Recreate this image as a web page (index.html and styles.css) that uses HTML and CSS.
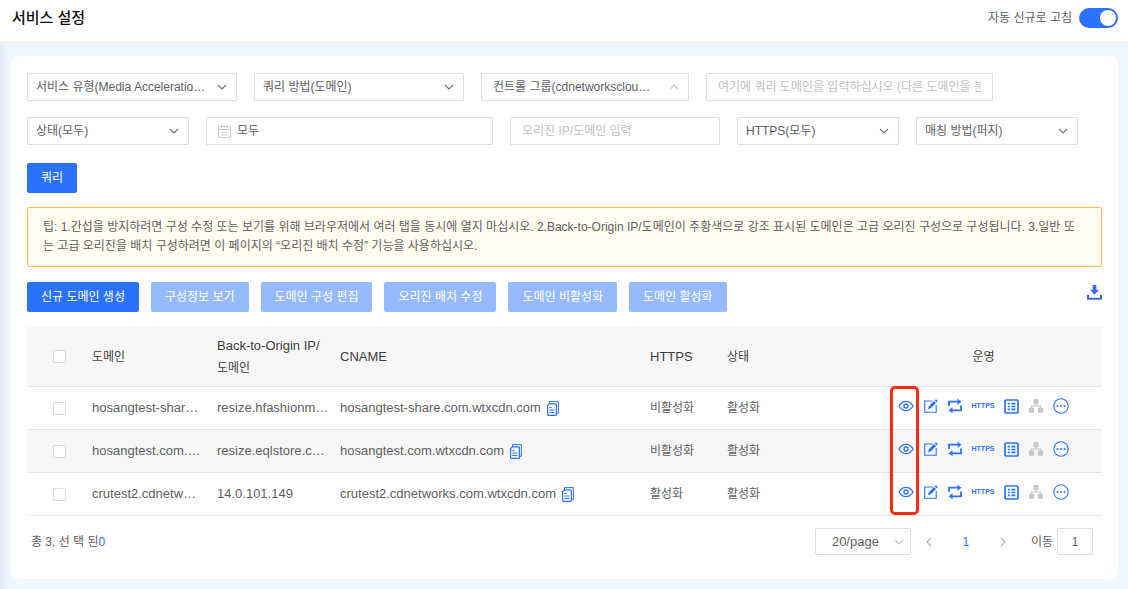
FILE: index.html
```
<!DOCTYPE html>
<html lang="ko">
<head>
<meta charset="utf-8">
<meta name="viewport" content="width=device-width, initial-scale=1">
<title>서비스 설정</title>
<link rel="stylesheet" href="styles.css">
</head>
<body>
<svg class="sprite" aria-hidden="true">
  <symbol id="down" viewBox="0 0 10 10"><path d="M1 3l4 4 4-4" fill="none" stroke="currentColor" stroke-width="1.2"/></symbol>
  <symbol id="up" viewBox="0 0 10 10"><path d="M1 7l4-4 4 4" fill="none" stroke="currentColor" stroke-width="1.1"/></symbol>
  <symbol id="copy" viewBox="0 0 12 15"><path d="M2.500 2.800V.6h8.900v11.600h-1.600" fill="none" stroke="currentColor"/><path d="M2.300 2.800H8.600Q9.400 2.800 9.400 3.600V13.400Q9.400 14.300 8.600 14.300H1.400Q.6 14.300.6 13.400V4.600z" fill="none" stroke="currentColor" stroke-width="1.200"/><path d="M2.400 6.500h2.200M2.400 9h5M2.400 11.500h5" stroke="currentColor" fill="none"/></symbol>
  <symbol id="eye" viewBox="0 0 16 16"><path d="M1 8C4.500 1.800 11.500 1.800 15 8 11.500 14.200 4.500 14.200 1 8z" fill="none" stroke="currentColor" stroke-width="1.300"/><circle cx="8" cy="8" r="2" fill="none" stroke="currentColor" stroke-width="1.300"/></symbol>
  <symbol id="edit" viewBox="0 0 14 14"><path d="M8.500 2H.7v11.300h11.500V6" fill="none" stroke="currentColor" stroke-width="1.100"/><path d="M4 10.200l.8-3L10 2l2 2-5.200 5.300zM10.700 1.400L12 .2 13.900 2l-1.200 1.300z" fill="currentColor"/></symbol>
  <symbol id="loop" viewBox="0 0 14 16"><path d="M1 8V3.700h9.500M13 7.500v4.800H3.500" fill="none" stroke="currentColor" stroke-width="1.800"/><path d="M9.500.7l4 3-4 3zM4.500 9.300l-4 3 4 3z" fill="currentColor"/></symbol>
  <symbol id="list" viewBox="0 0 15 15"><rect x="1" y="1" width="13" height="13" rx="1" fill="none" stroke="currentColor" stroke-width="1.700"/><path d="M3.800 4.700h2M3.800 7.500h2M3.800 10.300h2M7.400 4.700h4M7.400 7.500h4M7.400 10.300h4" fill="none" stroke="currentColor" stroke-width="1.700"/></symbol>
  <symbol id="tree" viewBox="0 0 14 14"><rect x="4.500" y="0" width="5" height="5.500" rx="1.300" fill="currentColor"/><rect x="0" y="8.500" width="5.200" height="5.300" rx="1.300" fill="currentColor"/><rect x="8.800" y="8.500" width="5.200" height="5.300" rx="1.300" fill="currentColor"/><path d="M7 5v2M2.600 9V7h8.800v2" fill="none" stroke="currentColor" stroke-width="1.100"/></symbol>
  <symbol id="more" viewBox="0 0 16 16"><circle cx="8" cy="8" r="7.200" fill="none" stroke="currentColor" stroke-width="1.100"/><circle cx="4.500" cy="8" r="1" fill="currentColor"/><circle cx="8" cy="8" r="1" fill="currentColor"/><circle cx="11.500" cy="8" r="1" fill="currentColor"/></symbol>
</svg>

<header class="topbar">
  <h1 class="title">서비스 설정</h1>
  <label class="refresh">자동 신규로 고침<input class="switch" type="checkbox" role="switch" checked></label>
</header>

<main class="page">
  <section class="card">
    <form class="filters">
      <div class="filter-row">
        <span class="picker mid"><select class="field" aria-label="서비스 유형"><option>서비스 유형(Media Acceleratio…</option></select><svg class="chevron"><use href="#down"/></svg></span>
        <span class="picker mid"><select class="field" aria-label="쿼리 방법"><option>쿼리 방법(도메인)</option></select><svg class="chevron"><use href="#down"/></svg></span>
        <span class="picker group"><select class="field inset" aria-label="컨트롤 그룹"><option>컨트롤 그룹(cdnetworksclou…</option></select><svg class="chevron pale"><use href="#up"/></svg></span>
        <input class="field inset wide" type="text" aria-label="도메인" placeholder="여기에 쿼리 도메인을 입력하십시오 (다른 도메인을 분리하려면 쉼표 사용)">
      </div>
      <div class="filter-row">
        <span class="picker small"><select class="field" aria-label="상태"><option>상태(모두)</option></select><svg class="chevron"><use href="#down"/></svg></span>
        <label class="field date wide">
          <svg class="calendar" viewBox="0 0 13 13"><path d="M.5 1.500h12v11H.5zM.5 4.500h12M3.500 0v3M9.500 0v3" fill="none" stroke="currentColor"/><path d="M3 7h2M5.500 7h2M8 7h2M3 10h2M5.500 10h2M8 10h2" stroke="currentColor" fill="none"/></svg>
          <input class="date-input" type="text" value="모두" aria-label="기간">
        </label>
        <input class="field inset mid" type="text" aria-label="오리진" placeholder="오리진 IP/도메인 입력">
        <span class="picker small"><select class="field" aria-label="HTTPS"><option>HTTPS(모두)</option></select><svg class="chevron"><use href="#down"/></svg></span>
        <span class="picker small"><select class="field" aria-label="매칭 방법"><option>매칭 방법(퍼지)</option></select><svg class="chevron"><use href="#down"/></svg></span>
      </div>
      <div class="filter-row submit"><button class="btn" type="button">쿼리</button></div>
    </form>

    <p class="tip">팁: 1.간섭을 방지하려면 구성 수정 또는 보기를 위해 브라우저에서 여러 탭을 동시에 열지 마십시오. 2.Back-to-Origin IP/도메인이 주황색으로 강조 표시된 도메인은 고급 오리진 구성으로 구성됩니다. 3.일반 또는 고급 오리진을 배치 구성하려면 이 페이지의 “오리진 배치 수정” 기능을 사용하십시오.</p>

    <div class="toolbar">
      <button class="btn" type="button">신규 도메인 생성</button>
      <button class="btn" type="button" disabled>구성정보 보기</button>
      <button class="btn" type="button" disabled>도메인 구성 편집</button>
      <button class="btn" type="button" disabled>오리진 배치 수정</button>
      <button class="btn" type="button" disabled>도메인 비활성화</button>
      <button class="btn" type="button" disabled>도메인 활성화</button>
      <button class="icon-btn download" type="button" aria-label="다운로드"><svg width="15" height="15" viewBox="0 0 15 15"><path d="M5.700 0h3.600v4.700H12L7.500 9.800 3 4.700h2.700z" fill="currentColor"/><path d="M1 9.700v4h13v-4" fill="none" stroke="currentColor" stroke-width="2"/></svg></button>
    </div>

    <div class="table-wrap">
      <table class="grid">
        <colgroup><col class="c-check"><col class="c-domain"><col class="c-origin"><col><col class="c-https"><col class="c-state"><col class="c-ops"></colgroup>
        <thead>
          <tr><th class="check"><input class="box" type="checkbox" aria-label="전체 선택"></th><th>도메인</th><th class="wrap"><span class="latin">Back-to-Origin IP/</span><br>도메인</th><th class="latin">CNAME</th><th class="latin">HTTPS</th><th>상태</th><th class="center">운영</th></tr>
        </thead>
        <tbody>
          <tr>
            <td class="check"><input class="box" type="checkbox" aria-label="hosangtest-share 선택"></td><td class="latin">hosangtest-shar…</td><td class="latin">resize.hfashionm…</td>
            <td class="latin"><span class="cname">hosangtest-share.com.wtxcdn.com<button class="icon-btn" type="button" aria-label="복사"><svg width="12" height="15"><use href="#copy"/></svg></button></span></td><td>비활성화</td><td>활성화</td>
            <td><div class="ops"><button class="icon-btn" type="button" aria-label="보기"><svg width="16" height="16"><use href="#eye"/></svg></button><button class="icon-btn" type="button" aria-label="편집"><svg width="14" height="14"><use href="#edit"/></svg></button><button class="icon-btn" type="button" aria-label="전환"><svg width="14" height="16"><use href="#loop"/></svg></button><button class="icon-btn https" type="button">HTTPS</button><button class="icon-btn" type="button" aria-label="목록"><svg width="15" height="15"><use href="#list"/></svg></button><button class="icon-btn" type="button" aria-label="구조" disabled><svg width="14" height="14"><use href="#tree"/></svg></button><button class="icon-btn" type="button" aria-label="더 보기"><svg width="16" height="16"><use href="#more"/></svg></button></div></td>
          </tr>
          <tr>
            <td class="check"><input class="box" type="checkbox" aria-label="hosangtest 선택"></td><td class="latin">hosangtest.com.…</td><td class="latin">resize.eqlstore.c…</td>
            <td class="latin"><span class="cname">hosangtest.com.wtxcdn.com<button class="icon-btn" type="button" aria-label="복사"><svg width="12" height="15"><use href="#copy"/></svg></button></span></td><td>비활성화</td><td>활성화</td>
            <td><div class="ops"><button class="icon-btn" type="button" aria-label="보기"><svg width="16" height="16"><use href="#eye"/></svg></button><button class="icon-btn" type="button" aria-label="편집"><svg width="14" height="14"><use href="#edit"/></svg></button><button class="icon-btn" type="button" aria-label="전환"><svg width="14" height="16"><use href="#loop"/></svg></button><button class="icon-btn https" type="button">HTTPS</button><button class="icon-btn" type="button" aria-label="목록"><svg width="15" height="15"><use href="#list"/></svg></button><button class="icon-btn" type="button" aria-label="구조" disabled><svg width="14" height="14"><use href="#tree"/></svg></button><button class="icon-btn" type="button" aria-label="더 보기"><svg width="16" height="16"><use href="#more"/></svg></button></div></td>
          </tr>
          <tr>
            <td class="check"><input class="box" type="checkbox" aria-label="crutest2 선택"></td><td class="latin">crutest2.cdnetw…</td><td class="latin">14.0.101.149</td>
            <td class="latin"><span class="cname">crutest2.cdnetworks.com.wtxcdn.com<button class="icon-btn" type="button" aria-label="복사"><svg width="12" height="15"><use href="#copy"/></svg></button></span></td><td>활성화</td><td>활성화</td>
            <td><div class="ops"><button class="icon-btn" type="button" aria-label="보기"><svg width="16" height="16"><use href="#eye"/></svg></button><button class="icon-btn" type="button" aria-label="편집"><svg width="14" height="14"><use href="#edit"/></svg></button><button class="icon-btn" type="button" aria-label="전환"><svg width="14" height="16"><use href="#loop"/></svg></button><button class="icon-btn https" type="button">HTTPS</button><button class="icon-btn" type="button" aria-label="목록"><svg width="15" height="15"><use href="#list"/></svg></button><button class="icon-btn" type="button" aria-label="구조" disabled><svg width="14" height="14"><use href="#tree"/></svg></button><button class="icon-btn" type="button" aria-label="더 보기"><svg width="16" height="16"><use href="#more"/></svg></button></div></td>
          </tr>
        </tbody>
      </table>
      <span class="highlight"></span>
    </div>

    <footer class="pager">
      <p class="total">총 3, 선 택 된<span class="count">0</span></p>
      <nav class="pages" aria-label="페이지">
        <span class="picker size"><select class="field latin" aria-label="페이지 크기"><option>20/page</option></select><svg class="chevron pale"><use href="#down"/></svg></span>
        <button class="icon-btn arrow" type="button" aria-label="이전"><svg width="10" height="10" viewBox="0 0 10 10"><path d="M7 1L3 5l4 4" fill="none" stroke="currentColor" stroke-width="1.200"/></svg></button>
        <a class="current" href="#" aria-current="page">1</a>
        <button class="icon-btn arrow" type="button" aria-label="다음"><svg width="10" height="10" viewBox="0 0 10 10"><path d="M3 1l4 4-4 4" fill="none" stroke="currentColor" stroke-width="1.200"/></svg></button>
        <label class="jump">이동<input class="field jump-input" type="text" value="1"></label>
      </nav>
    </footer>
  </section>
</main>
</body>
</html>
```

FILE: styles.css
```
* { box-sizing: border-box; }

body {
  margin: 0;
  min-height: 100vh;
  display: flex;
  flex-direction: column;
  background: #f0f7fe;
  color: #5f6062;
  font: 12px/18px "Liberation Sans", "Noto Sans CJK KR", sans-serif;
}

button, input, select { font: inherit; color: inherit; margin: 0; }
p { margin: 0; }
.sprite { display: none; }
.latin { font-size: 13px; }

.topbar {
  display: flex;
  align-items: center;
  justify-content: space-between;
  height: 45px;
  padding: 0 10px 6px 12px;
  background: #fff;
  border-bottom: 4px solid #f3f4f7;
}

.title { margin: 0; font-size: 15px; font-weight: 500; color: #111; }
.refresh { display: flex; align-items: center; gap: 7px; }

.switch {
  appearance: none;
  display: flex;
  width: 39px;
  height: 20px;
  padding: 2px;
  border-radius: 10px;
  background: #2b73ff;
}

.switch::before {
  content: "";
  width: 16px;
  height: 16px;
  margin-left: auto;
  border-radius: 50%;
  background: #fff;
}

.page {
  flex: 1;
  display: flex;
  padding: 11px 10px 10px 11px;
  background: linear-gradient(to right, #e3ecf5, #f0f7fe 10px);
}

.card {
  flex: 1;
  min-width: 0;
  padding: 17px 16px 23px;
  border-radius: 8px;
  background: #fff;
}

.filters { display: grid; gap: 16px; }
.filter-row { display: flex; flex-wrap: wrap; gap: 17px; }
.submit { padding-top: 2px; }
.mid { width: 210px; }
.group { width: 208px; }
.wide { width: 287px; }
.small { width: 162px; }
.picker { position: relative; display: flex; }

.field {
  appearance: none;
  height: 28px;
  padding: 0 8px;
  border: 1px solid #dddfe3;
  border-radius: 1px;
  background: #fff;
  outline: none;
}

.picker .field { width: 100%; }
.field.inset { padding: 0 11px; }
.field::placeholder { color: #c0c0c3; }
.chevron { position: absolute; right: 10px; top: 9px; width: 10px; height: 10px; color: #6f7587; pointer-events: none; }
.pale { color: #c3c5cb; }
.date { display: flex; align-items: center; gap: 6px; }
.field.date { padding: 0 11px; }
.calendar { width: 13px; height: 13px; color: #cbcbce; }
.date-input { flex: 1; min-width: 0; padding: 0; border: 0; outline: none; background: none; }

.btn {
  height: 30px;
  padding: 0 14px;
  border: 0;
  border-radius: 2px;
  background: #2b73ff;
  color: #fff;
  white-space: nowrap;
}

.btn:disabled { background: #96b9ff; }

.tip {
  margin: 14px 0 15px;
  padding: 10px 16px 10px 15px;
  border: 1px solid #ffb84d;
  border-radius: 2px;
  background: #fffdf0;
  line-height: 19px;
  word-break: break-all;
}

.toolbar { display: flex; gap: 12px; margin-bottom: 15px; }
.icon-btn { display: flex; padding: 0; border: 0; background: none; color: #2b73ff; }
.icon-btn:disabled { color: #c8c8c8; }
.download { margin: 3px 0 0 auto; color: #3c68ff; align-self: flex-start; }

.table-wrap { position: relative; }
.grid { width: 100%; border-collapse: separate; border-spacing: 0; table-layout: fixed; }
.c-check { width: 65px; }
.c-domain { width: 125px; }
.c-origin { width: 123px; }
.c-https { width: 77px; }
.c-state { width: 138px; }
.c-ops { width: 237px; }

.grid th, .grid td {
  height: 43px;
  padding: 0;
  border-bottom: 1px solid #e6e6e8;
  text-align: left;
  white-space: nowrap;
}

.grid th { height: 60px; background: #f7f7f7; color: #3d3e40; font-weight: 400; }
.grid .wrap { line-height: 22px; }
.grid .center { text-align: center; }
.grid tbody tr:nth-child(even) { background: #f7f7f7; }
.grid .check { padding-left: 26px; }
.box { appearance: none; display: block; width: 13px; height: 13px; border: 1px solid #d9dade; border-radius: 1px; background: #fff; }
.cname { display: flex; align-items: center; gap: 6px; }
.ops { display: flex; align-items: center; justify-content: center; gap: 10px; padding-bottom: 4px; }
.https { width: 22px; justify-content: center; font: 700 7px/14px "Liberation Sans", sans-serif; }

.highlight {
  position: absolute;
  top: 59px;
  right: 183px;
  bottom: 1px;
  width: 29px;
  border: 3px solid #fb2b12;
  border-radius: 5px;
  pointer-events: none;
}

.pager { display: flex; align-items: center; justify-content: space-between; padding: 12px 9px 0 4px; }
.count, .current { color: #2b73ff; }
.pages { display: flex; align-items: center; }
.pages .field { height: 27px; border-radius: 2px; }
.size { width: 96px; }
.size .field { padding: 0 16px; }
.size .chevron { right: 7px; }
.arrow { margin: 0 13px; color: #b0b2b8; }
.current { width: 38px; text-align: center; text-decoration: none; }
.jump { display: flex; align-items: center; gap: 4px; margin-left: 10px; }
.jump-input { width: 36px; text-align: center; }
```
